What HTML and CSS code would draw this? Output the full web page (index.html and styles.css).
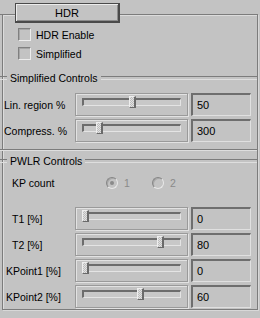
FILE: index.html
```html
<!DOCTYPE html>
<html>
<head>
<meta charset="utf-8">
<link rel="stylesheet" href="styles.css">
</head>
<body>
<div class="rollout">
  <div class="btn">HDR</div>
  <div class="check first"><span class="box"></span><span>HDR Enable</span></div>
  <div class="check second"><span class="box"></span><span>Simplified</span></div>

  <div class="gtitle g-simple"><span>Simplified Controls</span></div>
  <div class="row r-first">
    <div class="lbl">Lin. region %</div>
    <div class="slider"><div class="track"><div class="thumb" style="left:47px"></div></div></div>
    <div class="edit">50</div>
  </div>
  <div class="row">
    <div class="lbl">Compress. %</div>
    <div class="slider"><div class="track"><div class="thumb" style="left:14px"></div></div></div>
    <div class="edit">300</div>
  </div>
  <div class="sep"></div>

  <div class="gtitle g-pwlr"><span>PWLR Controls</span></div>
  <div class="kprow">
    <div class="lbl lbl-kp">KP count</div>
    <div class="ropt"><span class="radio on"></span><span class="dis">1</span></div>
    <div class="ropt"><span class="radio"></span><span class="dis">2</span></div>
  </div>
  <div class="row r-t1">
    <div class="lbl lbl-t">T1 [%]</div>
    <div class="slider"><div class="track"><div class="thumb" style="left:0px"></div></div></div>
    <div class="edit">0</div>
  </div>
  <div class="row">
    <div class="lbl lbl-t">T2 [%]</div>
    <div class="slider"><div class="track"><div class="thumb" style="left:75px"></div></div></div>
    <div class="edit">80</div>
  </div>
  <div class="row">
    <div class="lbl lbl-k">KPoint1 [%]</div>
    <div class="slider"><div class="track"><div class="thumb" style="left:0px"></div></div></div>
    <div class="edit">0</div>
  </div>
  <div class="row">
    <div class="lbl lbl-k">KPoint2 [%]</div>
    <div class="slider"><div class="track"><div class="thumb" style="left:55px"></div></div></div>
    <div class="edit">60</div>
  </div>
</div>
</body>
</html>
```

FILE: styles.css
```css
* { box-sizing: border-box; }
html, body {
  margin: 0;
  padding: 0;
  background: #c3c3c3;
  width: 260px;
  height: 318px;
  overflow: hidden;
}
body {
  font-family: "Liberation Sans", Arial, sans-serif;
  font-size: 10.5px;
  color: #000;
}
.rollout {
  position: relative;
  margin: 14px 0 0 2px;
  width: 256px;
  border: 1px solid #7c7c7c;
  box-shadow: inset 1px 1px 0 #dcdcdc, 1px 1px 0 #d8d8d8;
  padding: 0 0 1px 0;
  display: flex;
  flex-direction: column;
}
.rollout::before {
  content: "";
  position: absolute;
  left: -3px;
  top: -1px;
  width: 3px;
  height: 0;
  border-top: 1px solid #7c7c7c;
}
.btn {
  margin: -12px 0 0 12px;
  width: 105px;
  height: 20px;
  background: #c3c3c3;
  border: 1px solid #4a4a4a;
  border-right-width: 2px;
  border-bottom-width: 2px;
  box-shadow: inset 1px 1px 0 #ececec, inset -1px -1px 0 #8c8c8c;
  display: flex;
  align-items: center;
  justify-content: center;
  font-size: 11px;
}
.check {
  display: flex;
  align-items: center;
  gap: 5px;
  height: 13px;
  margin-left: 15px;
}
.check.first { margin-top: 5px; }
.check.second { margin-top: 6px; }
.box {
  width: 13px;
  height: 13px;
  border-top: 1px solid #808080;
  border-left: 1px solid #808080;
  border-right: 1px solid #ececec;
  border-bottom: 1px solid #ececec;
  box-shadow: inset 1px 1px 0 #a6a6a6;
  background: #c3c3c3;
}
.gtitle {
  display: flex;
  align-items: center;
  height: 14px;
  gap: 2px;
}
.gtitle::before, .gtitle::after {
  content: "";
  height: 2px;
  border-top: 1px solid #7c7c7c;
  border-bottom: 1px solid #dedede;
}
.gtitle::before { width: 7px; margin-left: -3px; }
.gtitle::after { flex: 1; }
.gtitle span { padding: 0 1px; }
.g-simple { margin-top: 11px; }
.g-pwlr { margin-top: 3px; }
.sep {
  margin: 7px 0 0 -3px;
  height: 2px;
  border-top: 1px solid #7c7c7c;
  border-bottom: 1px solid #dedede;
}
.row {
  display: flex;
  align-items: flex-start;
  height: 23px;
  margin-top: 3px;
  padding-left: 1px;
}
.r-first { margin-top: 8px; }
.r-t1 { margin-top: 18px; }
.lbl {
  width: 71px;
  height: 23px;
  display: flex;
  align-items: center;
  white-space: nowrap;
}
.lbl-t { padding-left: 8px; }
.lbl-k { padding-left: 2px; }
.lbl-kp { padding-left: 8px; width: 102px; height: 13px; }
.slider {
  width: 113px;
  height: 23px;
  border: 1px solid #9a9a9a;
  box-shadow: inset 1px 1px 0 #e2e2e2, 1px 1px 0 #e2e2e2;
  padding: 4px 0 0 6px;
}
.track {
  position: relative;
  width: 99px;
  height: 8px;
  border-top: 2px solid #6c6c6c;
  border-left: 2px solid #6c6c6c;
  border-right: 1px solid #e4e4e4;
  border-bottom: 1px solid #e4e4e4;
  background: #c8c8c8;
}
.thumb {
  position: absolute;
  top: -4px;
  width: 7px;
  height: 12px;
  margin-left: -2px;
  border-top: 1px solid #eeeeee;
  border-left: 1px solid #eeeeee;
  border-right: 2px solid #6a6a6a;
  border-bottom: 1px solid #6a6a6a;
  background: repeating-conic-gradient(#bdbdbd 0 25%, #e2e2e2 0 50%) 0 0 / 2px 2px;
}
.edit {
  margin-left: 3px;
  width: 60px;
  height: 23px;
  border-top: 2px solid #6e6e6e;
  border-left: 2px solid #6e6e6e;
  border-right: 1px solid #e0e0e0;
  border-bottom: 1px solid #e0e0e0;
  padding-left: 4px;
  display: flex;
  align-items: center;
  font-size: 11px;
}
.kprow {
  display: flex;
  align-items: center;
  height: 13px;
  margin-top: 8px;
  padding-left: 1px;
}
.ropt {
  display: flex;
  align-items: center;
  gap: 6px;
  width: 46px;
}
.radio {
  position: relative;
  width: 12px;
  height: 12px;
  border-radius: 50%;
  border: 1px solid;
  border-color: #858585 #e8e8e8 #e8e8e8 #858585;
  box-shadow: inset 1px 1px 0 #a8a8a8;
}
.radio.on::after {
  content: "";
  position: absolute;
  left: 3px;
  top: 3px;
  width: 4px;
  height: 4px;
  border-radius: 50%;
  background: #8a8a8a;
}
.dis { color: #8a8a8a; }
```
